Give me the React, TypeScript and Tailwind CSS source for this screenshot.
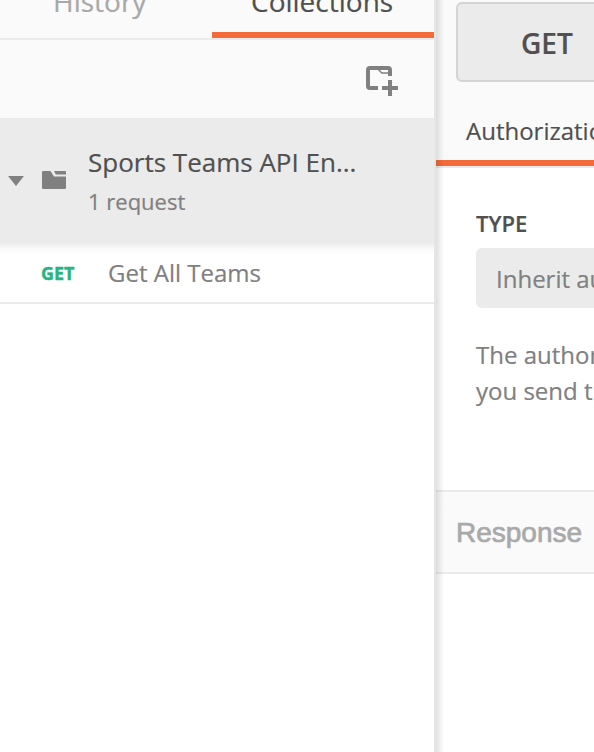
function NewFolderIcon() {
  return (
    <svg width="34" height="32" viewBox="0 0 34 32" className="block" fill="none">
      <path d="M12 22H4a2 2 0 0 1-2-2V4a2 2 0 0 1 2-2H22a2 2 0 0 1 2 2V10" stroke="#808080" strokeWidth="4" />
      <path d="M12.500 3.500L15.800 7H23" stroke="#808080" strokeWidth="1.500" />
      <path d="M22 14h4v6h6v4h-6v6h-4v-6h-6v-4h6z" fill="#808080" />
    </svg>
  );
}

function FolderIcon() {
  return (
    <svg width="24" height="18" viewBox="0 0 24 18" className="block" fill="#808080">
      <path d="M1 0H8.500L12 5.500H24V17a1 1 0 0 1-1 1H1a1 1 0 0 1-1-1V1a1 1 0 0 1 1-1z" />
      <path d="M12 0H23a1 1 0 0 1 1 1V3.500H13.800z" />
    </svg>
  );
}

function Sidebar() {
  return (
    <aside className="flex h-full w-[436px] shrink-0 flex-col border-r-2 border-[#e6e6e6] bg-white">
      <nav className="flex h-10 shrink-0 border-b-2 border-[#eaeaea] bg-[#fafafa] text-[28px] leading-[2px]">
        <div className="w-[212px] pl-[53px] text-[#a9a9a9]">History</div>
        <div className="w-[222px] border-b-[6px] border-[#f36b3b] pl-[39px] text-[#505050]">Collections</div>
      </nav>
      <div className="flex h-[78px] shrink-0 justify-end bg-[#fafafa] pt-[26px] pr-[34px]">
        <NewFolderIcon />
      </div>
      <div className="flex h-[125px] shrink-0 bg-[#ebebeb]">
        <svg width="16" height="10" viewBox="0 0 16 10" className="mt-[58px] ml-2 shrink-0">
          <path d="M0 0h16L8 10z" fill="#808080" />
        </svg>
        <div className="mt-[53px] ml-[18px] shrink-0"><FolderIcon /></div>
        <div className="ml-[22px] pt-[26px] whitespace-nowrap">
          <div className="text-[26px] leading-9 text-[#505050]">Sports Teams API En...</div>
          <div className="mt-[3px] text-[22px] leading-9 text-[#808080]">1 request</div>
        </div>
      </div>
      <div className="flex h-[61px] shrink-0 items-center border-b-2 border-[#eaeaea] bg-[linear-gradient(to_bottom,#ececec_0px,#f6f6f6_4px,#fcfcfc_8px,#ffffff_13px)] whitespace-nowrap">
        <div className="ml-[41px] w-[67px] shrink-0 pt-0.5 text-[18px] font-bold text-[#26b47f] [-webkit-text-stroke:0.4px]">GET</div>
        <div className="text-[24px] text-[#808080]">Get All Teams</div>
      </div>
    </aside>
  );
}

function RequestPanel() {
  return (
    <main className="relative flex h-full min-w-0 flex-1 flex-col overflow-hidden bg-white whitespace-nowrap">
      <div className="h-[168px] shrink-0 border-b-2 border-[#eaeaea] bg-[#fafafa] pt-0.5">
        <div className="ml-5 flex h-20 w-[220px] items-center rounded-[6px] border-2 border-[#d4d4d4] bg-[#ebebeb] pt-0.5 pl-[63px] text-[28px] font-semibold text-[#505050]">GET</div>
        <div className="flex h-[84px] w-[222px] items-center border-b-[6px] border-[#f36b3b] pt-[19px] pl-[30px] text-[24px] text-[#505050]">Authorization</div>
      </div>
      <section className="h-[322px] shrink-0 pt-[37px] pl-10">
        <div className="text-[22px] leading-9 font-semibold text-[#505050]">TYPE</div>
        <div className="mt-[7px] flex h-[60px] w-[300px] items-center rounded-[6px] bg-[#ebebeb] pt-0.5 pl-5 text-[24px] text-[#808080]">Inherit auth from parent</div>
        <p className="mt-[29px] text-[24px] leading-9 text-[#808080]">The authorization header will be<br />you send the request.</p>
      </section>
      <div className="flex h-[84px] shrink-0 items-center border-y-2 border-[#eaeaea] bg-[#fafafa] pt-0.5 pl-5 font-['Liberation_Sans',sans-serif] text-[28px] text-[#a9a9a9] [-webkit-text-stroke:0.7px]">Response</div>
      <div className="absolute inset-y-0 left-0 w-2 bg-linear-to-r from-black/12 to-transparent" />
    </main>
  );
}

export default function App() {
  return (
    <div className="flex h-[752px] w-[594px] overflow-hidden font-['Open_Sans',sans-serif] [-webkit-text-stroke:0.2px]">
      <Sidebar />
      <RequestPanel />
    </div>
  );
}
